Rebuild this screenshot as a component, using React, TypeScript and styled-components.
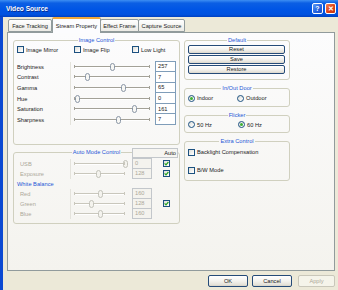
import React from 'react';
import styled, { createGlobalStyle } from 'styled-components';

const GlobalStyle = createGlobalStyle`
  html, body {
    margin: 0;
    padding: 0;
    background: #ece9d8;
  }
  body {
    width: 338px;
    height: 290px;
    overflow: hidden;
    font-family: "Liberation Sans", Arial, sans-serif;
    font-size: 5.7px;
    color: #222;
  }
  * { box-sizing: border-box; }
`;

const Window = styled.div`
  width: 338px;
  height: 290px;
  display: flex;
  flex-direction: column;
`;
const TitleBar = styled.div`
  height: 17px;
  flex: none;
  display: flex;
  align-items: center;
  padding: 0 2px 0 6px;
  background: linear-gradient(to bottom, #3d8ef3 0%, #0b5fe4 18%, #0055e5 55%, #0052df 85%, #0040c0 100%);
`;
const Title = styled.div`
  flex: 1;
  color: #fff;
  font-weight: bold;
  font-size: 6.6px;
  text-shadow: 1px 1px 0 #0a2a8a;
`;
const CaptionButton = styled.div<{ $close?: boolean }>`
  width: 11px;
  height: 11px;
  margin-left: 2px;
  border: 1px solid #fff;
  border-radius: 2px;
  display: flex;
  align-items: center;
  justify-content: center;
  color: #fff;
  font-weight: bold;
  font-size: 7px;
  background: ${(p) =>
    p.$close
      ? 'linear-gradient(135deg, #f0825a 0%, #e0441a 55%, #c3330f 100%)'
      : 'linear-gradient(135deg, #5d9cf6 0%, #2663e0 55%, #1a4fc8 100%)'};
`;
const Frame = styled.div`
  flex: 1;
  display: flex;
  flex-direction: column;
  border-left: 3px solid #0b49d2;
  padding: 0 3px 0 4px;
  background: #ece9d8;
`;
const TabRow = styled.div`
  height: 15px;
  display: flex;
  align-items: flex-end;
  padding-left: 2px;
`;
const Tab = styled.div<{ $active?: boolean; $w: number }>`
  width: ${(p) => p.$w}px;
  height: ${(p) => (p.$active ? 16 : 13)}px;
  margin-bottom: ${(p) => (p.$active ? -1 : 0)}px;
  position: relative;
  z-index: ${(p) => (p.$active ? 2 : 1)};
  display: flex;
  align-items: center;
  justify-content: center;
  white-space: nowrap;
  border: 1px solid #919b9c;
  border-bottom: ${(p) => (p.$active ? 'none' : '1px solid #919b9c')};
  border-top: ${(p) => (p.$active ? '2px solid #f1a83a' : '1px solid #919b9c')};
  border-radius: 2px 2px 0 0;
  background: ${(p) => (p.$active ? '#fcfcfe' : 'linear-gradient(#fff, #ecebe5)')};
  margin-left: ${(p) => (p.$active ? 0 : -1)}px;
`;
const Panel = styled.div`
  height: 239px;
  border: 1px solid #919b9c;
  background: linear-gradient(#fcfcfd, #f4f3ee);
  display: grid;
  grid-template-columns: 167px 106px;
  column-gap: 4px;
  align-items: start;
  padding: 4px 0 0 5px;
`;
const Column = styled.div<{ $gap: number }>`
  display: flex;
  flex-direction: column;
  gap: ${(p) => p.$gap}px;
`;
const Group = styled.fieldset<{ $h: number; $pl?: number }>`
  margin: 0;
  min-width: 0;
  height: ${(p) => p.$h}px;
  padding: 0 3px 0 ${(p) => p.$pl ?? 3}px;
  border: 1px solid #d0d0bf;
  border-radius: 3px;
`;
const Legend = styled.legend`
  margin: 0 auto;
  padding: 0 1px;
  line-height: 7px;
  color: #2557d6;
`;
const CheckRow = styled.div`
  display: grid;
  grid-template-columns: 57px 58px auto;
  margin-top: 1.5px;
  height: 8px;
  align-items: center;
`;
const Option = styled.div<{ $disabled?: boolean }>`
  display: flex;
  align-items: center;
  gap: 2px;
  white-space: nowrap;
  color: ${(p) => (p.$disabled ? '#aca899' : '#222')};
`;
const Box = styled.span<{ $disabled?: boolean }>`
  width: 7px;
  height: 7px;
  flex: none;
  display: inline-flex;
  align-items: center;
  justify-content: center;
  border: 1px solid ${(p) => (p.$disabled ? '#9aa6b0' : '#1c5180')};
  background: linear-gradient(135deg, #dcdcd7 0%, #fff 90%);
`;
const Round = styled.span`
  width: 7px;
  height: 7px;
  flex: none;
  border-radius: 50%;
  display: inline-flex;
  align-items: center;
  justify-content: center;
  border: 1px solid #1c5180;
  background: linear-gradient(135deg, #dcdcd7 0%, #fff 90%);
`;
const Dot = styled.span`
  width: 3px;
  height: 3px;
  border-radius: 50%;
  background: #3cb034;
`;
const SliderGrid = styled.div<{ $cols: string; $row: number; $top: number }>`
  display: grid;
  grid-template-columns: ${(p) => p.$cols};
  grid-auto-rows: ${(p) => p.$row}px;
  align-items: center;
  margin-top: ${(p) => p.$top}px;
`;
const Label = styled.div<{ $disabled?: boolean; $indent?: number }>`
  padding-left: ${(p) => p.$indent ?? 0}px;
  color: ${(p) => (p.$disabled ? '#aca899' : '#222')};
  white-space: nowrap;
`;
const SubTitle = styled.div`
  grid-column: 1 / -1;
  color: #2557d6;
`;
const SliderCell = styled.div<{ $right: number }>`
  height: 100%;
  display: flex;
  align-items: center;
  padding: 0 ${(p) => p.$right}px 0 3px;
  border-left: 1px solid #e4e3dc;
`;
const Track = styled.div<{ $disabled?: boolean }>`
  position: relative;
  flex: 1;
  height: 2px;
  border-top: 1px solid ${(p) => (p.$disabled ? '#c9c7bc' : '#a3a197')};
  border-bottom: 1px solid #fff;
  &::before,
  &::after {
    content: '';
    position: absolute;
    top: -2px;
    width: 1px;
    height: 3px;
    background: ${(p) => (p.$disabled ? '#c9c7bc' : '#a3a197')};
  }
  &::before { left: 0; }
  &::after { right: 0; }
`;
const Thumb = styled.svg`
  position: absolute;
  top: -4px;
  margin-left: -2.5px;
`;
const ValueBox = styled.div<{ $disabled?: boolean }>`
  height: calc(100% + 1px);
  margin-top: -1px;
  border: 1px solid ${(p) => (p.$disabled ? '#c3c7cb' : '#7f9db9')};
  background: ${(p) => (p.$disabled ? '#f4f3ee' : '#fff')};
  color: ${(p) => (p.$disabled ? '#aca899' : '#222')};
  display: flex;
  align-items: center;
  padding-left: 2px;
`;
const AutoHeader = styled.div`
  width: 46px;
  height: 10px;
  margin: -8.5px 0 1px 115px;
  border: 1px solid #c3c7cb;
  background: #f6f5f1;
  display: flex;
  align-items: center;
  justify-content: flex-end;
  padding-right: 1px;
`;
const CheckCell = styled.div`
  display: flex;
  justify-content: center;
  padding-left: 3px;
`;
const Buttons = styled.div`
  display: flex;
  flex-direction: column;
  gap: 1px;
  margin-top: 0.5px;
  padding-right: 1px;
`;
const Button = styled.div<{ $w?: number; $disabled?: boolean }>`
  width: ${(p) => (p.$w ? `${p.$w}px` : 'auto')};
  height: ${(p) => (p.$w ? 12 : 9)}px;
  display: flex;
  align-items: center;
  justify-content: center;
  border: 1px solid ${(p) => (p.$disabled ? '#c9c7ba' : '#254b78')};
  border-radius: 2px;
  color: ${(p) => (p.$disabled ? '#aca899' : '#222')};
  background: ${(p) =>
    p.$disabled ? '#f5f4ea' : 'linear-gradient(#fff 0%, #f3f2ee 50%, #e3e0d7 90%, #d4cfc3 100%)'};
`;
const RadioRow = styled.div<{ $cols: string; $top: number }>`
  display: grid;
  grid-template-columns: ${(p) => p.$cols};
  align-items: center;
  height: 8px;
  margin-top: ${(p) => p.$top}px;
`;
const StackRow = styled.div<{ $top: number }>`
  height: 8px;
  display: flex;
  align-items: center;
  margin-top: ${(p) => p.$top}px;
`;
const Footer = styled.div`
  display: flex;
  justify-content: flex-end;
  gap: 4px;
  padding-top: 4px;
`;

const Check = ({ checked, disabled }: { checked?: boolean; disabled?: boolean }) => (
  <Box $disabled={disabled}>
    {checked && (
      <svg width="5" height="5" viewBox="0 0 5 5">
        <path d="M0.6 2.3 L2 3.8 L4.4 1" stroke="#21a121" strokeWidth="1.2" fill="none" />
      </svg>
    )}
  </Box>
);

const Radio = ({ checked }: { checked?: boolean }) => <Round>{checked && <Dot />}</Round>;

const Slider = ({ value, disabled }: { value: number; disabled?: boolean }) => (
  <Track $disabled={disabled}>
    <Thumb width="5" height="8" viewBox="0 0 5 8" style={{ left: `${value}%` }}>
      <rect
        x="0.5"
        y="0.5"
        width="4"
        height="7"
        rx="2"
        fill={disabled ? '#f4f3ee' : '#f7f7f4'}
        stroke={disabled ? '#c3c3ba' : '#8a97a6'}
      />
    </Thumb>
  </Track>
);

const imageRows = [
  { name: 'Brightness', value: '257', pos: 51 },
  { name: 'Contrast', value: '7', pos: 18 },
  { name: 'Gamma', value: '65', pos: 65 },
  { name: 'Hue', value: '0', pos: 4 },
  { name: 'Saturation', value: '161', pos: 80 },
  { name: 'Sharpness', value: '7', pos: 59 },
];

const AutoRow = ({ name, value, pos, auto }: { name: string; value: string; pos: number; auto?: boolean }) => (
  <>
    <Label $disabled $indent={3}>{name}</Label>
    <SliderCell $right={7}>
      <Slider value={pos} disabled />
    </SliderCell>
    <ValueBox $disabled>{value}</ValueBox>
    <CheckCell>{auto && <Check checked />}</CheckCell>
  </>
);

const App = () => (
  <Window>
    <GlobalStyle />
    <TitleBar>
      <Title>Video Source</Title>
      <CaptionButton>?</CaptionButton>
      <CaptionButton $close>✕</CaptionButton>
    </TitleBar>
    <Frame>
      <TabRow>
        <Tab $w={44}>Face Tracking</Tab>
        <Tab $w={49} $active>Stream Property</Tab>
        <Tab $w={39}>Effect Frame</Tab>
        <Tab $w={47}>Capture Source</Tab>
      </TabRow>
      <Panel>
        <Column $gap={4}>
          <Group $h={108}>
            <Legend>Image Control</Legend>
            <CheckRow>
              <Option><Check />Image Mirror</Option>
              <Option><Check />Image Flip</Option>
              <Option><Check />Low Light</Option>
            </CheckRow>
            <SliderGrid $cols="53px 85px 21px" $row={10.6} $top={8}>
              {imageRows.map((r) => (
                <React.Fragment key={r.name}>
                  <Label>{r.name}</Label>
                  <SliderCell $right={5}>
                    <Slider value={r.pos} />
                  </SliderCell>
                  <ValueBox>{r.value}</ValueBox>
                </React.Fragment>
              ))}
            </SliderGrid>
          </Group>
          <Group $h={75}>
            <Legend>Auto Mode Control</Legend>
            <AutoHeader>Auto</AutoHeader>
            <SliderGrid $cols="53px 62px 20px 26px" $row={10} $top={0}>
              <AutoRow name="USB" value="0" pos={100} auto />
              <AutoRow name="Exposure" value="128" pos={49} auto />
              <SubTitle>White Balance</SubTitle>
              <AutoRow name="Red" value="160" pos={51} />
              <AutoRow name="Green" value="128" pos={35} auto />
              <AutoRow name="Blue" value="160" pos={51} />
            </SliderGrid>
          </Group>
        </Column>
        <Column $gap={5}>
          <Group $h={43}>
            <Legend>Default</Legend>
            <Buttons>
              <Button>Reset</Button>
              <Button>Save</Button>
              <Button>Restore</Button>
            </Buttons>
          </Group>
          <Group $h={22}>
            <Legend>In/Out Door</Legend>
            <RadioRow $cols="49px auto" $top={2}>
              <Option><Radio checked />Indoor</Option>
              <Option><Radio />Outdoor</Option>
            </RadioRow>
          </Group>
          <Group $h={21}>
            <Legend>Flicker</Legend>
            <RadioRow $cols="50px auto" $top={1.5}>
              <Option><Radio />50 Hz</Option>
              <Option><Radio checked />60 Hz</Option>
            </RadioRow>
          </Group>
          <Group $h={43}>
            <Legend>Extra Control</Legend>
            <StackRow $top={3}>
              <Option><Check />Backlight Compensation</Option>
            </StackRow>
            <StackRow $top={10}>
              <Option><Check />B/W Mode</Option>
            </StackRow>
          </Group>
        </Column>
      </Panel>
      <Footer>
        <Button $w={40}>OK</Button>
        <Button $w={40}>Cancel</Button>
        <Button $w={37} $disabled style={{ marginLeft: 2 }}>Apply</Button>
      </Footer>
    </Frame>
  </Window>
);

export default App;
